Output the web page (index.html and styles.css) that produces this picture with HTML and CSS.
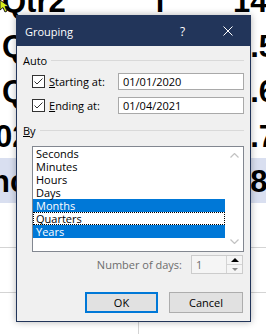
FILE: index.html
```html
<!DOCTYPE html>
<html lang="en">
<head>
    <meta charset="UTF-8">
    <meta name="viewport" content="width=device-width, initial-scale=1.0">
    <title>Grouping</title>
    <link rel="stylesheet" href="styles.css">
</head>
<body>

    <!-- Sheet behind the dialog -->
    <div class="sheet">
        <div class="sheet-row">
            <span class="cell col-a">Qtr2</span>
            <span class="cell col-b">f</span>
            <span class="cell col-c">14</span>
        </div>
        <div class="sheet-row">
            <span class="cell col-a">Qtr3</span>
            <span class="cell col-b">f</span>
            <span class="cell col-c">1.5</span>
        </div>
        <div class="sheet-row">
            <span class="cell col-a">Qtr4</span>
            <span class="cell col-b">f</span>
            <span class="cell col-c">1.6</span>
        </div>
        <div class="sheet-row">
            <span class="cell col-a shift">02</span>
            <span class="cell col-b"></span>
            <span class="cell col-c">1.7</span>
        </div>
        <div class="sheet-row total">
            <span class="cell col-a shift-more">nc</span>
            <span class="cell col-b"></span>
            <span class="cell col-c">78</span>
        </div>
        <div class="sheet-row empty">
            <span class="cell col-a"></span>
            <span class="cell col-b"></span>
            <span class="cell col-c"></span>
        </div>
        <div class="sheet-row empty">
            <span class="cell col-a"></span>
            <span class="cell col-b"></span>
            <span class="cell col-c"></span>
        </div>
        <div class="sheet-row empty">
            <span class="cell col-a"></span>
            <span class="cell col-b"></span>
            <span class="cell col-c"></span>
        </div>
    </div>

    <!-- Mouse pointer -->
    <svg class="pointer" width="12" height="14" viewBox="0 0 12 14">
        <path d="M0 0 L0 10 L3 7.5 L5 12 L7 11 L5 6.5 L9 6.5 Z" fill="#d7ee1c" stroke="#1a1a1a" stroke-width="1"/>
    </svg>

    <!-- Grouping dialog -->
    <div class="dialog">
        <div class="titlebar">
            <span class="title">Grouping</span>
            <span class="tb-btn">?</span>
            <span class="tb-btn">
                <svg width="10" height="10" viewBox="0 0 10 10">
                    <path d="M0.5 0.5 L9.5 9.5 M9.5 0.5 L0.5 9.5" stroke="#fff" stroke-width="1"/>
                </svg>
            </span>
        </div>

        <div class="dialog-body">
            <div class="group-head">
                <span>Auto</span>
                <span class="group-line"></span>
            </div>

            <div class="check-row first">
                <svg class="checkbox" width="13" height="13" viewBox="0 0 13 13">
                    <rect x="0.5" y="0.5" width="12" height="12" fill="#fff" stroke="#333"/>
                    <path d="M2.5 6.5 L5 9 L10.5 3.5" fill="none" stroke="#333" stroke-width="1"/>
                </svg>
                <span class="check-label"><u>S</u>tarting at:</span>
                <span class="text-box">01/01/2020</span>
            </div>

            <div class="check-row">
                <svg class="checkbox" width="13" height="13" viewBox="0 0 13 13">
                    <rect x="0.5" y="0.5" width="12" height="12" fill="#fff" stroke="#333"/>
                    <path d="M2.5 6.5 L5 9 L10.5 3.5" fill="none" stroke="#333" stroke-width="1"/>
                </svg>
                <span class="check-label"><u>E</u>nding at:</span>
                <span class="text-box">01/04/2021</span>
            </div>

            <div class="group-head by">
                <span><u>B</u>y</span>
                <span class="group-line"></span>
            </div>

            <div class="list-box">
                <ul class="list-items">
                    <li>Seconds</li>
                    <li>Minutes</li>
                    <li>Hours</li>
                    <li>Days</li>
                    <li class="selected">Months</li>
                    <li class="focused">Quarters</li>
                    <li class="selected">Years</li>
                </ul>
                <div class="list-scroll">
                    <svg width="9" height="5" viewBox="0 0 9 5">
                        <path d="M0.5 4.5 L4.5 0.5 L8.5 4.5" fill="none" stroke="#c2c2c2" stroke-width="1.2"/>
                    </svg>
                    <svg width="9" height="5" viewBox="0 0 9 5">
                        <path d="M0.5 0.5 L4.5 4.5 L8.5 0.5" fill="none" stroke="#c2c2c2" stroke-width="1.2"/>
                    </svg>
                </div>
            </div>

            <div class="days-row">
                <span class="days-label">Number of days:</span>
                <div class="spin-box">
                    <span class="spin-value">1</span>
                    <div class="spin-buttons">
                        <span class="spin-btn"><span class="arrow-up"></span></span>
                        <span class="spin-btn"><span class="arrow-down"></span></span>
                    </div>
                </div>
            </div>

            <div class="button-row">
                <button class="btn btn-default">OK</button>
                <button class="btn">Cancel</button>
            </div>
        </div>
    </div>

</body>
</html>
```

FILE: styles.css
```css
* {
    box-sizing: border-box;
}

body {
    margin: 0;
    width: 266px;
    height: 334px;
    overflow: hidden;
    position: relative;
    background: #ffffff;
    font-family: "Open Sans", "Noto Sans", sans-serif;
}

/* Sheet behind */
.sheet {
    margin-top: -22px;
    font-family: "Liberation Sans", Arial, sans-serif;
    font-size: 31px;
    font-weight: bold;
    color: #000;
}

.sheet-row {
    display: grid;
    grid-template-columns: 139px 94px 60px;
    height: 45px;
    padding-top: 2px;
    line-height: 43px;
    white-space: nowrap;
}

.sheet-row.total {
    background: #d9dff0;
}

.sheet-row.empty {
    padding-top: 0;
    border-bottom: 1px solid #d4d4d4;
}

.sheet-row.empty .col-a {
    border-right: 1px solid #d4d4d4;
}

.col-a {
    padding-left: 2px;
}

.col-a.shift {
    text-indent: -7px;
}

.col-a.shift-more {
    text-indent: -11px;
}

.col-b {
    padding-left: 16px;
}

/* Pointer */
.pointer {
    position: absolute;
    left: 0;
    top: 0;
}

/* Dialog */
.dialog {
    position: absolute;
    left: 16px;
    top: 15px;
    width: 235px;
    height: 307px;
    background: #f0f0f0;
    border: 1px solid #22355a;
    box-shadow: 0 0 7px rgba(0, 0, 0, 0.3);
    display: flex;
    flex-direction: column;
    font-size: 11px;
    color: #000;
}

.titlebar {
    height: 30px;
    background: #22355a;
    color: #ffffff;
    display: flex;
    align-items: center;
}

.title {
    flex: 1;
    padding-left: 8px;
}

.tb-btn {
    width: 45px;
    height: 30px;
    display: flex;
    align-items: center;
    justify-content: center;
    font-size: 12px;
}

.dialog-body {
    padding: 0 6px;
    display: flex;
    flex-direction: column;
}

.group-head {
    margin-top: 7px;
    height: 14px;
    display: flex;
    align-items: center;
    gap: 4px;
}

.group-head.by {
    margin-top: 9px;
}

.group-line {
    flex: 1;
    height: 1px;
    background: #d9d9d9;
}

.check-row {
    margin-top: 7px;
    padding-left: 9px;
    height: 17px;
    display: flex;
    align-items: center;
}

.check-row.first {
    margin-top: 6px;
}

.checkbox {
    margin-right: 4px;
    flex-shrink: 0;
}

.text-box {
    margin-left: auto;
    width: 126px;
    height: 17px;
    background: #ffffff;
    border: 1px solid #a9a9a9;
    padding-left: 4px;
    line-height: 15px;
}

/* List */
.list-box {
    margin-top: 9px;
    margin-left: 9px;
    height: 106px;
    border: 1px solid #828790;
    background: #ffffff;
    display: flex;
}

.list-items {
    list-style: none;
    margin: 0;
    padding: 0;
    flex: 1;
}

.list-items li {
    height: 13px;
    line-height: 13px;
    padding-left: 3px;
}

.list-items li.selected {
    background: #0078d7;
    color: #ffffff;
}

.list-items li.focused {
    border: 1px dotted #000;
    padding-left: 2px;
    line-height: 11px;
}

.list-scroll {
    width: 18px;
    display: flex;
    flex-direction: column;
    justify-content: space-between;
    align-items: center;
    padding: 6px 0 7px;
}

/* Number of days */
.days-row {
    margin-top: 3px;
    display: flex;
    justify-content: flex-end;
    align-items: center;
    gap: 9px;
    padding-right: 1px;
}

.days-label {
    color: #6d6d6d;
}

.spin-box {
    width: 52px;
    height: 19px;
    border: 1px solid #cccccc;
    background: #f5f5f5;
    display: flex;
}

.spin-value {
    flex: 1;
    padding-left: 4px;
    line-height: 17px;
    color: #6d6d6d;
}

.spin-buttons {
    width: 16px;
    border-left: 1px solid #d4d4d4;
    display: flex;
    flex-direction: column;
}

.spin-btn {
    flex: 1;
    display: flex;
    align-items: center;
    justify-content: center;
}

.spin-btn + .spin-btn {
    border-top: 1px solid #d4d4d4;
}

.arrow-up {
    border-left: 4px solid transparent;
    border-right: 4px solid transparent;
    border-bottom: 4px solid #000;
}

.arrow-down {
    border-left: 3px solid transparent;
    border-right: 3px solid transparent;
    border-top: 3px solid #8a8a8a;
}

/* Buttons */
.button-row {
    margin-top: 18px;
    display: flex;
    justify-content: flex-end;
    gap: 11px;
    padding-right: 1px;
}

.btn {
    width: 74px;
    height: 21px;
    background: #e1e1e1;
    border: 1px solid #adadad;
    font-family: inherit;
    font-size: 11px;
    color: #000;
    padding: 0;
}

.btn-default {
    width: 73px;
    border: 2px solid #0078d7;
}
```
